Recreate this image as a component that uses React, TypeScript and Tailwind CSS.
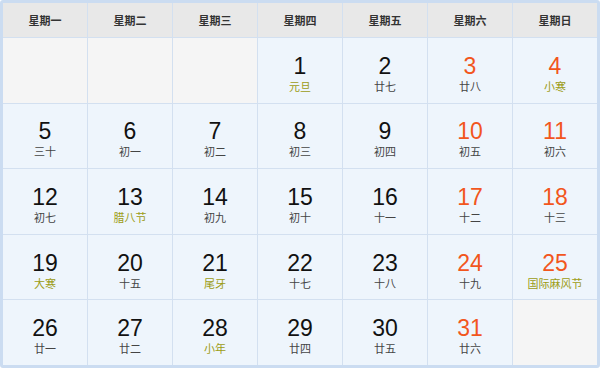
const WEEK = ["星期一", "星期二", "星期三", "星期四", "星期五", "星期六", "星期日"];

type Day = { d: number; lunar: string; fest?: boolean } | null;

const DAYS: Day[] = [
  null, null, null,
  { d: 1, lunar: "元旦", fest: true },
  { d: 2, lunar: "廿七" },
  { d: 3, lunar: "廿八" },
  { d: 4, lunar: "小寒", fest: true },
  { d: 5, lunar: "三十" },
  { d: 6, lunar: "初一" },
  { d: 7, lunar: "初二" },
  { d: 8, lunar: "初三" },
  { d: 9, lunar: "初四" },
  { d: 10, lunar: "初五" },
  { d: 11, lunar: "初六" },
  { d: 12, lunar: "初七" },
  { d: 13, lunar: "腊八节", fest: true },
  { d: 14, lunar: "初九" },
  { d: 15, lunar: "初十" },
  { d: 16, lunar: "十一" },
  { d: 17, lunar: "十二" },
  { d: 18, lunar: "十三" },
  { d: 19, lunar: "大寒", fest: true },
  { d: 20, lunar: "十五" },
  { d: 21, lunar: "尾牙", fest: true },
  { d: 22, lunar: "十七" },
  { d: 23, lunar: "十八" },
  { d: 24, lunar: "十九" },
  { d: 25, lunar: "国际麻风节", fest: true },
  { d: 26, lunar: "廿一" },
  { d: 27, lunar: "廿二" },
  { d: 28, lunar: "小年", fest: true },
  { d: 29, lunar: "廿四" },
  { d: 30, lunar: "廿五" },
  { d: 31, lunar: "廿六" },
  null,
];

export default function App() {
  return (
    <div className="h-[368px] w-[600px] bg-white font-['Liberation_Sans','Noto_Sans_CJK_SC',sans-serif]">
      <div className="grid h-full w-full grid-cols-7 grid-rows-[34px_repeat(5,1fr)] gap-px rounded-[3px] border-[3px] border-[#cbdcf1] bg-[#d3e0f0]">
        {WEEK.map((w) => (
          <div
            key={w}
            className="flex items-center justify-center bg-[#e8e8e8] text-[11px] font-bold text-[#333] font-['Noto_Sans_CJK_SC',sans-serif]"
          >
            {w}
          </div>
        ))}
        {DAYS.map((day, i) => {
          if (!day) return <div key={i} className="bg-[#f5f5f5]" />;
          const weekend = i % 7 >= 5;
          return (
            <div key={i} className="flex flex-col items-center justify-center bg-[#eef5fc] pt-[7px]">
              <span
                className={`text-[23px] leading-[24px] ${weekend ? "text-[#f2561d]" : "text-[#111]"}`}
              >
                {day.d}
              </span>
              <span
                className={`text-[11px] leading-[16px] font-['Noto_Sans_CJK_SC',sans-serif] ${
                  day.fest ? "text-[#9c9c14]" : "text-[#444]"
                }`}
              >
                {day.lunar}
              </span>
            </div>
          );
        })}
      </div>
    </div>
  );
}
